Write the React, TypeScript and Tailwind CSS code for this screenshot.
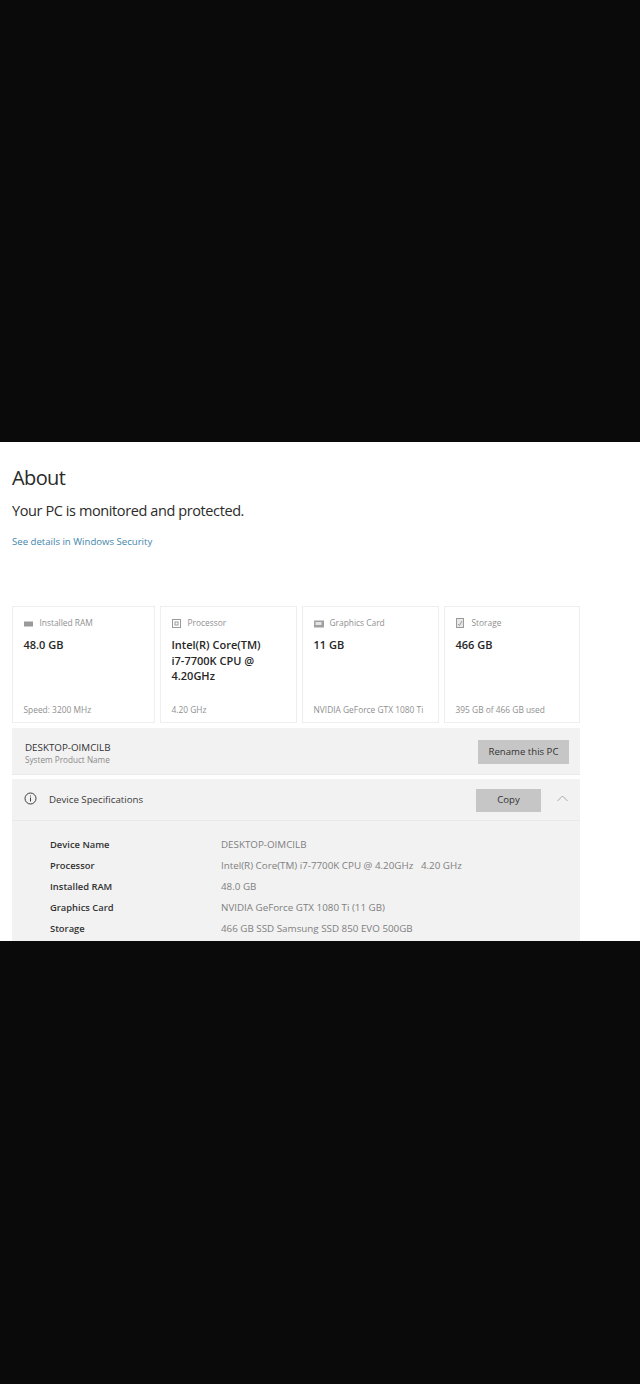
const cards = [
  { label: "Installed RAM", value: ["48.0 GB"], foot: "Speed: 3200 MHz", icon: "ram" },
  { label: "Processor", value: ["Intel(R) Core(TM)", "i7-7700K CPU @", "4.20GHz"], foot: "4.20 GHz", icon: "cpu" },
  { label: "Graphics Card", value: ["11 GB"], foot: "NVIDIA GeForce GTX 1080 Ti", icon: "gpu" },
  { label: "Storage", value: ["466 GB"], foot: "395 GB of 466 GB used", icon: "disk" },
];

const specs = [
  ["Device Name", "DESKTOP-OIMCILB"],
  ["Processor", "Intel(R) Core(TM) i7-7700K CPU @ 4.20GHz   4.20 GHz"],
  ["Installed RAM", "48.0 GB"],
  ["Graphics Card", "NVIDIA GeForce GTX 1080 Ti (11 GB)"],
  ["Storage", "466 GB SSD Samsung SSD 850 EVO 500GB"],
];

function CardIcon({ name }: { name: string }) {
  if (name === "ram") {
    return (
      <svg width="10" height="10" viewBox="0 0 10 10" className="shrink-0">
        <rect x="0" y="2.5" width="9" height="5" fill="#9a9a9a" />
      </svg>
    );
  }
  if (name === "cpu") {
    return (
      <svg width="10" height="10" viewBox="0 0 10 10" fill="none" stroke="#9a9a9a" className="shrink-0">
        <rect x="0.5" y="0.5" width="8" height="8" />
        <rect x="3" y="3" width="3" height="3" />
      </svg>
    );
  }
  if (name === "gpu") {
    return (
      <svg width="10" height="10" viewBox="0 0 10 10" className="shrink-0">
        <rect x="0" y="1.5" width="10" height="7" fill="#a0a0a0" />
        <rect x="1.5" y="3" width="6" height="3" fill="#e4e4e4" />
      </svg>
    );
  }
  return (
    <svg width="10" height="11" viewBox="0 0 10 11" fill="none" stroke="#9a9a9a" className="shrink-0">
      <rect x="0.5" y="0.5" width="7" height="9" fill="#e8e8e8" />
      <path d="M2 6l1.5 1.5L6 3" />
    </svg>
  );
}

export default function App() {
  return (
    <div className="flex h-[1384px] w-[640px] flex-col overflow-hidden bg-[#0a0a0a] font-['Open_Sans',sans-serif]">
      <div className="h-[442px] shrink-0" />
      <div className="h-[499px] shrink-0 overflow-hidden bg-white pl-3">
        <h1 className="pt-[22px] text-[20px] leading-[28px] tracking-[-0.6px] text-[#2a2a2a]">About</h1>
        <p className="mt-[9px] text-[14.5px] leading-[20px] tracking-[-0.4px] text-[#2b2b2b]">Your PC is monitored and protected.</p>
        <a className="mt-[14px] block text-[9.6px] leading-[14px] text-[#3f86ad]">See details in Windows Security</a>

        <div className="mt-[57px] grid w-[568px] grid-cols-[143px_137px_137px_136px] gap-[5px]">
          {cards.map((c) => (
            <div key={c.label} className="flex h-[117px] flex-col border border-[#eeeeee] pt-[10px] pr-1 pb-[6px] pl-[10.5px]">
              <div className="flex h-[13px] items-center gap-[6px] text-[8.4px] text-[#8f8f8f]">
                <CardIcon name={c.icon} />
                <span>{c.label}</span>
              </div>
              <div className="mt-[7px] text-[11px] leading-[15.5px] font-semibold text-[#262626]">
                {c.value.map((line) => (
                  <div key={line}>{line}</div>
                ))}
              </div>
              <div className="mt-auto text-[8.4px] leading-[13px] whitespace-nowrap text-[#8f8f8f]">{c.foot}</div>
            </div>
          ))}
        </div>

        <div className="mt-[5px] flex h-[47px] w-[568px] items-center justify-between border-b border-[#e9e9e9] bg-[#f2f2f2] pr-[11px] pl-[13px]">
          <div className="pt-[4px]">
            <div className="text-[9.8px] leading-[13px] text-[#333]">DESKTOP-OIMCILB</div>
            <div className="text-[8.2px] leading-[12px] text-[#8a8a8a]">System Product Name</div>
          </div>
          <button className="mt-[2px] h-[24px] w-[91px] bg-[#c6c6c6] text-[9.6px] text-[#333]">Rename this PC</button>
        </div>

        <div className="mt-[4px] w-[568px] bg-[#f2f2f2] pb-10">
          <div className="flex h-[42px] items-center border-b border-[#e9e9e9] pr-[12px] pl-[12px]">
            <svg width="13" height="13" viewBox="0 0 13 13" fill="none" stroke="#3c3c3c" className="mb-[2px] shrink-0">
              <circle cx="6.5" cy="6.5" r="5.5" />
              <path d="M6.5 5.5v4M6.5 3.5v1" />
            </svg>
            <span className="ml-[12px] pt-[2px] text-[9.7px] text-[#3a3a3a]">Device Specifications</span>
            <button className="mt-[2px] mr-[16px] ml-auto h-[23px] w-[65px] bg-[#c6c6c6] text-[9.6px] text-[#333]">Copy</button>
            <svg width="11" height="7" viewBox="0 0 11 7" fill="none" stroke="#a8a8a8" className="mb-[2px] shrink-0">
              <path d="M0.5 6L5.5 1l5 5" />
            </svg>
          </div>
          <div className="pt-[14px] pl-[38px]">
            {specs.map(([k, v]) => (
              <div key={k} className="flex h-[21px] items-center">
                <div className="w-[171px] shrink-0 text-[9.4px] font-semibold text-[#333]">{k}</div>
                <div className="text-[9.8px] whitespace-pre text-[#808080]">{v}</div>
              </div>
            ))}
          </div>
        </div>
      </div>
    </div>
  );
}
